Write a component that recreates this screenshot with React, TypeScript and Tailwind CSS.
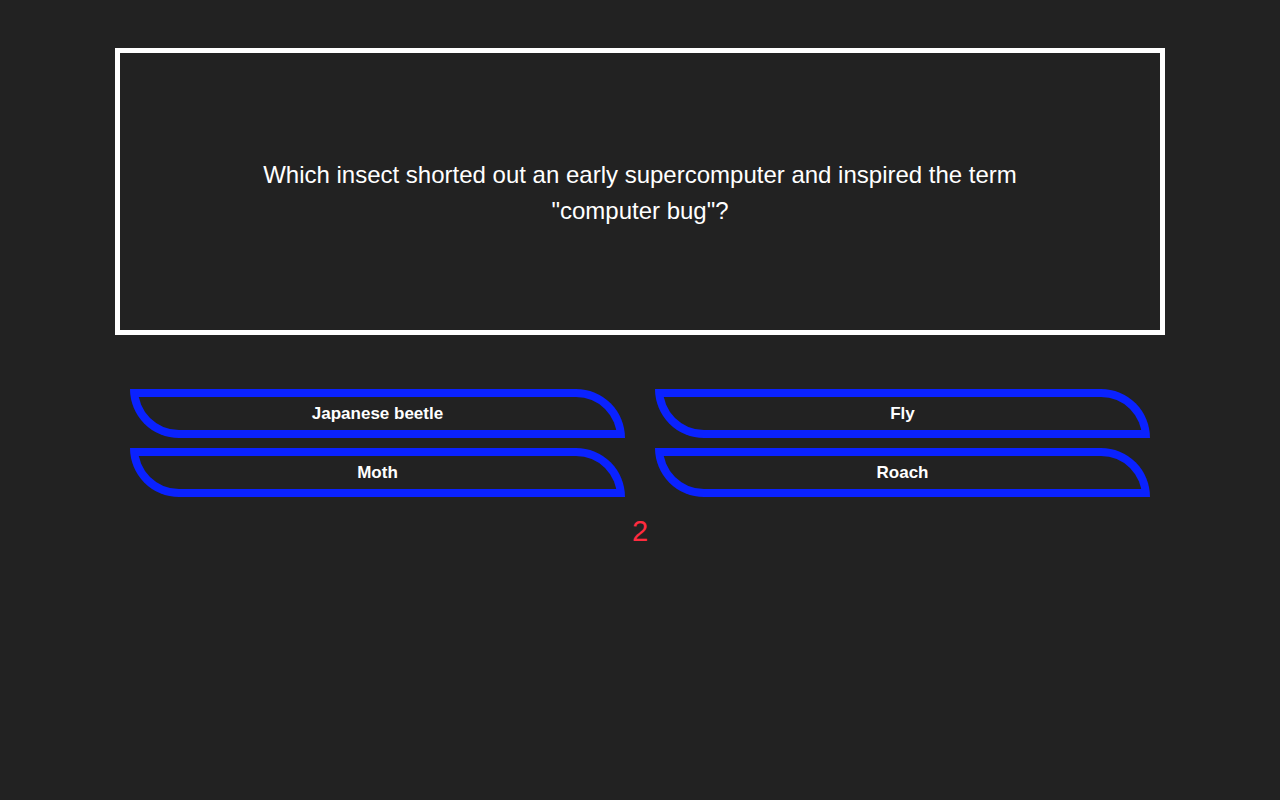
const answers = ["Japanese beetle", "Fly", "Moth", "Roach"];

export default function App() {
  return (
    <div className="min-h-screen w-full bg-[#222222] pt-[48px]" style={{ fontFamily: '"Liberation Sans", Arial, sans-serif' }}>
      <div className="mx-auto w-[1050px]">
        <div className="flex h-[287px] items-center justify-center border-[5px] border-white">
          <p className="mt-[2px] max-w-[800px] text-center text-[24px] leading-[36px] text-white">
            Which insect shorted out an early supercomputer and inspired the term "computer bug"?
          </p>
        </div>

        <div className="mx-[15px] mt-[54px] grid grid-cols-2 gap-x-[30px] gap-y-[10px]">
          {answers.map((a) => (
            <button
              key={a}
              className="flex h-[49px] items-center justify-center rounded-[0_49px_0_49px] border-[8px] border-[#0a22ff] bg-transparent text-[17px] font-semibold text-white"
            >
              {a}
            </button>
          ))}
        </div>

        <div className="mt-[13px] text-center text-[29px] text-[#ff2b3f]">2</div>
      </div>
    </div>
  );
}
